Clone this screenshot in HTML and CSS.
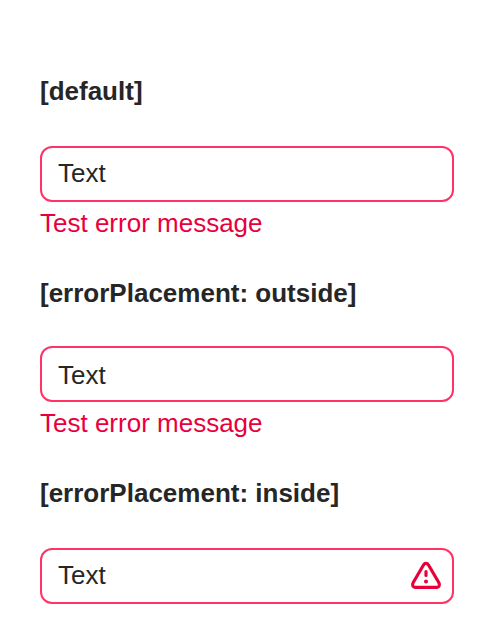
FILE: index.html
```html
<!DOCTYPE html>
<html lang="en">
<head>
<meta charset="utf-8">
<title>Text field errors</title>
<link rel="stylesheet" href="styles.css">
</head>
<body>
<main>
<section>
<h4>[default]</h4>
<div class="field"><span>Text</span></div>
<p class="error">Test error message</p>
</section>
<section>
<h4 class="compact">[errorPlacement: outside]</h4>
<div class="field lowered"><span>Text</span></div>
<p class="error">Test error message</p>
</section>
<section>
<h4>[errorPlacement: inside]</h4>
<div class="field"><span>Text</span>
<svg class="icon" viewBox="0 0 32 32" fill="none" stroke="currentColor" stroke-width="3.2" stroke-linecap="round" stroke-linejoin="round"><path d="M13.5 5 L3.1 22.8 C1.9 24.9 2.9 27.3 5.1 27.3 H26.9 C29.1 27.3 30.1 24.9 28.9 22.8 L18.5 5 C17.2 2.9 14.8 2.9 13.5 5 Z"/><path d="M16 11.7V15.5"/><circle cx="16" cy="21.5" r="2" fill="currentColor" stroke="none"/></svg>
</div>
</section>
</main>
</body>
</html>
```
FILE: styles.css
```css
* { box-sizing: border-box; }
body { margin: 0; background: #fff; color: #262626; font: 26px/30px "Liberation Sans", Arial, sans-serif; }
main { padding: 76px 40px 40px; }
h4 { margin: 0 0 40px; font-size: 26px; line-height: 30px; }
.compact { margin-bottom: 38px; }
.field { height: 56px; display: flex; align-items: center; justify-content: space-between; border: 2px solid #ff3366; border-radius: 12px; padding: 0 10px 0 16px; }
.field span { padding-bottom: 2px; }
.lowered span { padding: 2px 0 0; }
.error { margin: 6px 0 40px; color: #e8003d; }
.icon { width: 32px; height: 32px; color: #e8003d; }
```
